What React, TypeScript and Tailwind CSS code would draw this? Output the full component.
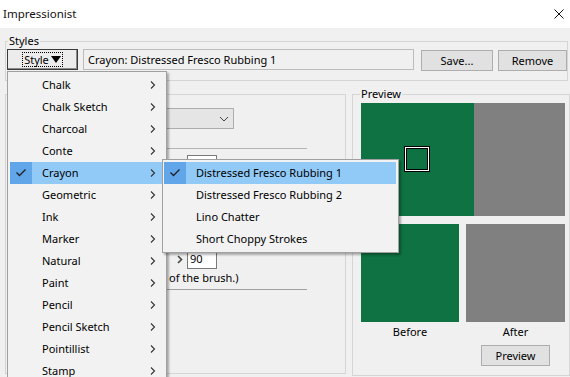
import React from "react";

const styleNames = [
  "Chalk",
  "Chalk Sketch",
  "Charcoal",
  "Conte",
  "Crayon",
  "Geometric",
  "Ink",
  "Marker",
  "Natural",
  "Paint",
  "Pencil",
  "Pencil Sketch",
  "Pointillist",
  "Stamp",
];

const crayonNames = [
  "Distressed Fresco Rubbing 1",
  "Distressed Fresco Rubbing 2",
  "Lino Chatter",
  "Short Choppy Strokes",
];

function Chevron() {
  return (
    <svg width="6" height="10" viewBox="0 0 6 10" className="shrink-0">
      <polyline points="1,1.5 4.5,5 1,8.5" fill="none" stroke="#333" strokeWidth="1.1" />
    </svg>
  );
}

function Check() {
  return (
    <svg width="12" height="10" viewBox="0 0 12 10">
      <polyline points="1.5,4.5 4.5,7.5 10.5,1.5" fill="none" stroke="#1f1f1f" strokeWidth="1.3" />
    </svg>
  );
}

function MenuItem({ label, active, sub }: { label: string; active?: boolean; sub?: boolean }) {
  return (
    <div className={`flex h-[22px] items-center ${active ? "bg-[#91c9f7]" : ""}`}>
      <div
        className={`flex h-full w-[22px] shrink-0 items-center justify-center ${
          active ? "bg-[#62a6ea]" : ""
        }`}
      >
        {active && <Check />}
      </div>
      <span className="ml-[10px] flex-1 text-black">{label}</span>
      {sub && (
        <span className="mr-[8px]">
          <Chevron />
        </span>
      )}
    </div>
  );
}

export default function App() {
  return (
    <div className="relative flex h-[377px] w-[570px] flex-col overflow-hidden bg-[#f0f0f0] font-['Noto_Sans',sans-serif] text-[11px] leading-[14px] text-black">
      {/* title bar */}
      <div className="flex h-[28px] shrink-0 items-center justify-between bg-white pl-[3px] pr-[6px]">
        <span className="text-[11.5px] text-[#111]">Impressionist</span>
        <svg width="10" height="10" viewBox="0 0 10 10">
          <path d="M0.5 0.5 L9.5 9.5 M9.5 0.5 L0.5 9.5" stroke="#111" strokeWidth="1" />
        </svg>
      </div>

      {/* Styles group */}
      <fieldset className="ml-[5px] mr-[2px] mt-[6px] h-[47px] border border-[#d5d5d5]">
        <legend className="ml-[2px] px-[1px] leading-[14px]">Styles</legend>
        <div className="mt-px flex items-start">
          <button className="ml-px flex h-[21px] w-[71px] items-center justify-center border border-[#3a3a3a] bg-[#ececec] shadow-[inset_-1px_-1px_0_#8a8a8a]">
            <span className="flex h-[15px] items-center gap-[2px] border border-dotted border-black px-px">
              Style
              <svg width="10" height="7" viewBox="0 0 10 7">
                <polygon points="0,0 10,0 5,7" fill="#000" />
              </svg>
            </span>
          </button>
          <div className="ml-[5px] flex h-[21px] w-[331px] items-center border border-[#bcbcbc] pl-[4px]">
            Crayon: Distressed Fresco Rubbing 1
          </div>
          <button className="ml-[7px] mt-px h-[21px] w-[72px] border border-[#adadad] bg-[#e1e1e1]">Save...</button>
          <button className="ml-[5px] mt-px h-[21px] w-[69px] border border-[#adadad] bg-[#e1e1e1]">Remove</button>
        </div>
      </fieldset>

      {/* lower area */}
      <div className="mt-[6px] flex items-start">
        <div className="ml-[5px] mt-[7px] flex h-[280px] w-[341px] flex-col items-start border border-[#d5d5d5]">
          <div className="ml-[94px] mt-[13px] flex h-[21px] w-[134px] items-center justify-end border border-[#adadad] bg-[#e5e5e5] pr-[4px]">
            <svg width="10" height="6" viewBox="0 0 10 6">
              <polyline points="1,1 5,5 9,1" fill="none" stroke="#444" strokeWidth="1" />
            </svg>
          </div>
          <div className="ml-[6px] mt-[19px] w-[295px] border-t border-[#b5b5b5]" />
          <div className="ml-[181px] mt-[6px] h-[20px] w-[30px] border border-[#7a7a7a] bg-white" />
          <div className="mt-[74px] flex items-center">
            <span className="ml-[171px] w-[10px]">
              <svg width="6" height="9" viewBox="0 0 6 9">
                <polyline points="1,1 4.5,4.5 1,8" fill="none" stroke="#444" strokeWidth="1.6" />
              </svg>
            </span>
            <div className="flex h-[20px] w-[30px] items-center border border-[#7a7a7a] bg-white pl-[2px]">90</div>
          </div>
          <div className="ml-[163px] mt-[2px]">of the brush.)</div>
          <div className="ml-[6px] mt-[4px] w-[295px] border-t border-[#a0a0a0]" />
        </div>

        <fieldset className="ml-[6px] h-[289px] w-[218px] border border-[#d5d5d5]">
          <legend className="ml-[7px] px-[1px] leading-[14px]">Preview</legend>
          <div className="ml-[8px] mt-[2px] flex h-[113px] w-[204px]">
            <div className="relative w-[113px] bg-[#0e7242]">
              <div className="absolute left-[43px] top-[43px] h-[26px] w-[26px] border border-black bg-white p-px">
                <div className="h-full w-full border border-black bg-[#0e7242]" />
              </div>
            </div>
            <div className="flex-1 bg-[#808080]" />
          </div>
          <div className="ml-[8px] mt-[8px] flex gap-[7px]">
            <div className="flex w-[98px] flex-col items-center">
              <div className="h-[98px] w-full bg-[#0e7242]" />
              <span className="mt-[3px]">Before</span>
            </div>
            <div className="flex w-[99px] flex-col items-center">
              <div className="h-[98px] w-full bg-[#808080]" />
              <span className="mt-[3px]">After</span>
              <button className="mt-[6px] h-[21px] w-[69px] border border-[#adadad] bg-[#e1e1e1]">Preview</button>
            </div>
          </div>
        </fieldset>
      </div>

      {/* Style menu */}
      <div className="absolute left-[7px] top-[71px] w-[160px] border border-[#a0a0a0] bg-[#f2f2f2] px-[2px] pt-[2px] shadow-[2px_2px_2px_rgba(0,0,0,0.3)]">
        {styleNames.map((n) => (
          <MenuItem key={n} label={n} active={n === "Crayon"} sub />
        ))}
      </div>

      {/* Crayon submenu */}
      <div className="absolute left-[162px] top-[159px] w-[237px] border border-[#a0a0a0] bg-[#f2f2f2] py-[2px] pl-px pr-[2px] shadow-[2px_2px_2px_rgba(0,0,0,0.3)]">
        {crayonNames.map((n, i) => (
          <MenuItem key={n} label={n} active={i === 0} />
        ))}
      </div>
    </div>
  );
}
